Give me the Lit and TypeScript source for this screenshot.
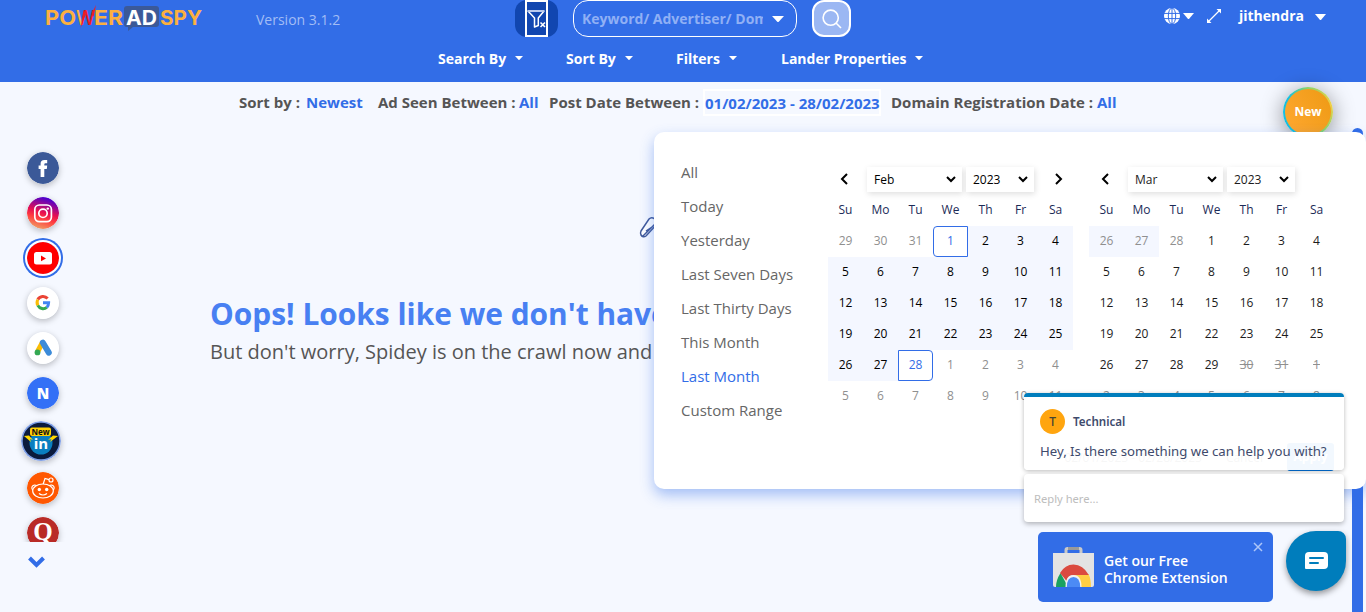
import { LitElement, html, css, svg } from "lit";
import { customElement, property } from "lit/decorators.js";
import { classMap } from "lit/directives/class-map.js";

const caret = (w: number, h: number) => html`<svg width=${w} height=${h} viewBox="0 0 10 5" preserveAspectRatio="none"><path d="M0 0H10L5.6 4.7Q5 5.2 4.4 4.7Z" fill="#fff"/></svg>`;

@customElement("month-grid")
class MonthGrid extends LitElement {
  @property() month = "";
  @property({ type: Boolean }) next = false;
  @property({ type: Boolean }) soft = false;
  @property({ type: Array }) days: string[] = [];

  static styles = css`
    :host { display: block; width: 245px; color: #000; font-size: 12px; }
    :host([soft]) { color: #1c1c1c; }
    .bar { display: flex; height: 25px; align-items: center; }
    .bar > * { flex: none; }
    .arrow { width: 35px; display: flex; justify-content: center; box-sizing: border-box; }
    .arrow.left { padding: 0 3px 2px 0; }
    .arrow.right { padding: 0 0 2px 14px; }
    .sel { height: 25px; box-sizing: border-box; display: flex; align-items: center; justify-content: space-between; background: #fff; box-shadow: 1px 2px 6px rgba(0,0,0,.13); padding: 0 6px 0 7px; }
    .m { width: 95px; margin: 0 4px; }
    .y { width: 68px; }
    .grid { display: grid; grid-template-columns: repeat(7, 35px); grid-auto-rows: 31px; }
    .head { height: 34px; color: #1c2b57; }
    .grid > span { box-sizing: border-box; display: flex; align-items: center; justify-content: center; padding-bottom: 2px; }
    .grid.head > span { padding: 3px 0 0; }
    .off { color: #8f8f8f; }
    .in { background: #f4f7ff; }
    .grid > .pick { border: 1px solid #326de7; color: #326de7; background: #fff; font-weight: 500; }
    .start { border-radius: 4px 0 0 4px; }
    .end { border-radius: 0 4px 4px 0; }
    .strike { text-decoration: line-through; }
  `;

  chev() {
    return html`<svg width="10" height="7" viewBox="0 0 10 7"><path d="M1 1L5 5L9 1" fill="none" stroke="#000" stroke-width="2"/></svg>`;
  }

  render() {
    return html`
      <div class="bar">
        <span class="arrow left"><svg width="8" height="12" viewBox="0 0 8 12"><path d="M7 1L2 6L7 11" fill="none" stroke="#000" stroke-width="2"/></svg></span>
        <span class="sel m">${this.month}${this.chev()}</span>
        <span class="sel y">2023${this.chev()}</span>
        ${this.next ? html`<span class="arrow right"><svg width="8" height="12" viewBox="0 0 8 12"><path d="M1 1L6 6L1 11" fill="none" stroke="#000" stroke-width="2"/></svg></span>` : ""}
      </div>
      <div class="grid head">${["Su", "Mo", "Tu", "We", "Th", "Fr", "Sa"].map((d) => html`<span>${d}</span>`)}</div>
      <div class="grid">
        ${this.days.map((d) => {
          const n = d.replace(/\D/g, "");
          return html`<span class=${classMap({
            off: d.includes("o"), in: d.includes("i"), strike: d.includes("x"),
            pick: /[se]/.test(d), start: d.includes("s"), end: d.includes("e"),
          })}>${n}</span>`;
        })}
      </div>`;
  }
}

const range = (a: number, b: number, flag = "") => Array.from({ length: b - a + 1 }, (_, i) => `${a + i}${flag}`);
const feb = [...range(29, 31, "o"), "1s", ...range(2, 27, "i"), "28e", ...range(1, 11, "o")];
const mar = ["26io", "27io", "28o", ...range(1, 29), "30ox", "31ox", ...range(1, 8, "ox")];

@customElement("app-root")
class AppRoot extends LitElement {
  static styles = css`
    :host { display: block; position: relative; width: 1366px; height: 612px; overflow: hidden; background: #f5f8ff; font-family: "Open Sans", "Noto Sans", sans-serif; color: #555; }
    * { box-sizing: border-box; }
    svg { display: block; flex: none; }
    header { height: 82px; background: #326de7; color: #fff; }
    .top { display: flex; height: 38px; padding-left: 45px; }
    .logo { width: 160px; }
    .version { width: 119px; margin-left: 51px; font-size: 14px; line-height: 40px; color: #a3bdf5; }
    .funnel { margin-left: 140px; width: 43px; height: 37px; border-radius: 12px; background: #1146b0; display: flex; justify-content: center; }
    .funnel div { width: 23px; height: 37px; border: 2px solid #fff; padding: 7px 0 0 0; }
    .search { margin-left: 15px; width: 224px; height: 37px; border: 1px solid #fff; border-radius: 15px; display: flex; align-items: center; padding: 0 12px 0 8px; font-size: 14px; font-weight: 700; color: #90b0f5; justify-content: space-between; }
    .search span { width: 181px; overflow: hidden; white-space: nowrap; }
    .go { margin-left: 15px; width: 39px; height: 37px; border: 2px solid #fff; border-radius: 12px; background: #9bb7f3; display: flex; justify-content: center; align-items: center; }
    .user { display: flex; margin-left: 313px; height: 31px; align-items: center; font-size: 14px; font-weight: 700; }
    .lang { margin: 0 13px 0 3px; }
    .name { margin: 0 11px 0 18px; width: 65px; white-space: nowrap; }
    .down { margin-top: 3px; }
    .menus { display: flex; padding-left: 438px; height: 40px; align-items: center; font-size: 14px; font-weight: 700; }
    .menus div { display: flex; align-items: center; justify-content: space-between; white-space: nowrap; }
    .filters { display: flex; align-items: center; height: 42px; padding: 0 0 2px 239px; font-size: 15px; font-weight: 700; color: #555; white-space: nowrap; }
    .filters b { color: #326de7; font-weight: 700; }
    .filters .date { border: 2px solid #fff; width: 178px; height: 27px; line-height: 24px; margin-top: 1px; }
    .main { display: flex; height: 488px; }
    .rail { width: 86px; padding-top: 20px; display: flex; flex-direction: column; }
    .socials { height: 398px; overflow: hidden; display: flex; flex-direction: column; align-items: center; padding-top: 8px; gap: 13px; }
    .soc { width: 32px; height: 32px; border-radius: 50%; flex: none; box-shadow: 0 2px 6px rgba(0,0,0,.25); }
    .active { box-shadow: 0 0 0 2px #fff, 0 0 0 4px #326de7; }
    .big { width: 40px; height: 40px; margin: -1px 4px -2px 0; }
    .more { margin: 14px 0 0 28px; }
    .empty { padding: 168px 0 0 124px; white-space: nowrap; }
    h1 { margin: 0; font-size: 29.9px; line-height: 44px; font-weight: 700; color: #4880f2; }
    .sub { font-size: 20px; line-height: 32px; }
    .shoe { position: absolute; left: 639px; top: 216px; }
    .track { position: absolute; left: 1352px; top: 128px; width: 11px; height: 490px; border-radius: 6px; background: #326de7; }
    .new { position: absolute; left: 1283px; top: 87px; width: 50px; height: 50px; border-radius: 50%; padding: 2px; background: conic-gradient(#8bd36b, #f0cf46 20%, #8bd36b 38%, #16bfe0 60%, #16bfe0 85%, #8bd36b); box-shadow: 0 4px 22px rgba(0,0,0,.42); }
    .new div { height: 46px; border-radius: 50%; background: linear-gradient(60deg, #ffa831, #ee9a14); color: #fff; font: 700 12px/46px "Open Sans", sans-serif; text-align: center; }
    .panel { position: absolute; left: 654px; top: 132px; width: 712px; height: 357px; border-radius: 10px; background: #fff; box-shadow: 0 6px 14px rgba(50,109,231,.42); display: flex; }
    .ranges { width: 174px; padding: 23px 0 0 27px; font-size: 15px; line-height: 34px; color: #666; }
    .chosen { color: #326de7; }
    .cals { padding-top: 35px; display: flex; flex-direction: column; }
    .pair { display: flex; gap: 16px; height: 276px; }
    .actions { display: flex; justify-content: flex-end; align-items: center; gap: 24px; width: 506px; height: 28px; font-size: 12px; }
    .apply { width: 47px; height: 28px; border-radius: 3px; background: #0074e0; color: #fff; font-weight: 700; line-height: 28px; text-align: center; }
    .chat { position: absolute; left: 1024px; top: 393px; width: 320px; display: flex; flex-direction: column; gap: 4px; color: #3e4a6c; font-family: "Noto Sans", sans-serif; }
    .msg { height: 77px; border-top: 4px solid #007dbc; border-radius: 4px; background: rgba(255,255,255,.95); box-shadow: 0 1px 4px rgba(0,0,0,.28); padding: 12px 16px; font-size: 13.2px; white-space: nowrap; }
    .who { display: flex; align-items: center; gap: 8px; height: 25px; font-size: 11.6px; font-weight: 600; }
    .av { width: 25px; height: 25px; border-radius: 50%; background: #ffa50f; color: #443; font-size: 12px; line-height: 25px; text-align: center; font-weight: 500; }
    .text { line-height: 20px; margin-top: 7px; }
    .reply { height: 48px; border-radius: 4px; background: #fff; box-shadow: 0 2px 5px rgba(0,0,0,.28); font-size: 11.2px; line-height: 49px; padding-left: 10px; color: #bdbdbd; }
    .ext { position: absolute; left: 1038px; top: 532px; width: 235px; height: 70px; border-radius: 5px; background: #326de7; color: #fff; display: flex; padding: 15px 10px 0 15px; font-size: 14px; line-height: 17px; font-weight: 600; }
    .ext p { margin: 5px 0 0 10px; width: 149px; flex: none; white-space: nowrap; }
    .x { margin-top: -5px; }
    .bubble { position: absolute; left: 1286px; top: 531px; width: 60px; height: 60px; border-radius: 50% 8px 50% 50%; background: #007dbc; box-shadow: 0 3px 6px rgba(0,0,0,.4); display: flex; align-items: center; justify-content: center; }
    .w1 { width: 85px; } .w2 { width: 67px; } .w3 { width: 61px; } .w4 { width: 142px; }
    .g1 { margin-left: 43px; } .g2 { margin-left: 43px; } .g3 { margin-left: 44px; }
    .f1 { width: 67px; } .f2 { width: 72px; } .f3 { width: 141px; } .f4 { width: 30px; } .f5 { width: 154px; } .f6 { width: 206px; margin-left: 10px; }
  `;

  logo() {
    return html`<svg class="logo" width="160" height="38" viewBox="0 0 160 38" font-family="Inter, sans-serif" font-weight="700" font-size="20">
      <defs><linearGradient id="bolt"><stop offset=".3" stop-color="#fbb040"/><stop offset=".3" stop-color="#ed1c24"/></linearGradient></defs>
      <path d="M82 6H111Q114 6 114 9V24Q114 27 111 27H88L83 31V27H82Q79 27 79 24V9Q79 6 82 6Z" fill="#3b5998"/>
      <text x="0" y="24.5" textLength="31" lengthAdjust="spacingAndGlyphs" fill="#fbb040">PO</text>
      <text x="31" y="24.5" textLength="19" lengthAdjust="spacingAndGlyphs" font-weight="500" fill="url(#bolt)">W</text>
      <text x="49" y="24.5" textLength="29" lengthAdjust="spacingAndGlyphs" fill="#fbb040">ER</text>
      <path d="M35.5 28.5L38.5 10L41 14.5L38.5 20ZM47 13L51 5L48.6 17Z" fill="#ed1c24"/>
      <text x="81" y="24.5" textLength="31" lengthAdjust="spacingAndGlyphs" fill="#fff">AD</text>
      <text x="115" y="24.5" textLength="42" lengthAdjust="spacingAndGlyphs" fill="#fbb040">SPY</text>
    </svg>`;
  }

  socials() {
    const icon = (body: unknown, cls = "") => html`<svg class="soc ${cls}" viewBox="0 0 32 32">${body}</svg>`;
    return html`
      ${icon(svg`<circle cx="16" cy="16" r="16" fill="#3b5998"/><path d="M13.6 25V17H11.6V13.6H13.6V11.7Q13.6 8 17.4 8H20.2V11.3H18.4Q17.3 11.3 17.3 12.4V13.6H20.2L19.8 17H17.3V25Z" fill="#fff"/>`)}
      ${icon(svg`<defs><linearGradient id="ig" x1=".7" y1="0" x2=".4" y2="1"><stop offset=".05" stop-color="#4a00d0"/><stop offset=".5" stop-color="#e8104f"/><stop offset=".7" stop-color="#ff4040"/><stop offset="1" stop-color="#ef9a62"/></linearGradient></defs><circle cx="16" cy="16" r="16" fill="url(#ig)"/><g fill="none" stroke="#fff" stroke-width="1.7"><rect x="7.8" y="8" width="16.6" height="16.6" rx="4.5"/><circle cx="16" cy="16.3" r="4.2"/></g><circle cx="20.8" cy="11.6" r="1.2" fill="#fff"/>`)}
      ${icon(svg`<circle cx="16" cy="16" r="16" fill="#f00"/><rect x="7" y="10" width="18" height="12.6" rx="2.5" fill="#fff"/><path d="M14 13.6V19.2L19 16.4Z" fill="#f00"/>`, "active")}
      ${icon(svg`<circle cx="16" cy="16" r="16" fill="#fff"/><g fill="none" stroke-width="3"><path d="M20.6 11.6A6 6 0 0 0 10.8 12.6" stroke="#ea4335"/><path d="M10.8 12.6A6.2 6.2 0 0 0 10.8 18.4" stroke="#fbbc05"/><path d="M10.8 18.4A6 6 0 0 0 19.8 20.4" stroke="#34a853"/><path d="M19.8 20.4Q21.5 18.8 21.6 15.7H16" stroke="#4285f4"/></g>`)}
      ${icon(svg`<circle cx="16" cy="16" r="16" fill="#fff"/><path d="M15.5 10.5L10.5 19.8" stroke="#fbbc04" stroke-width="5.2"/><path d="M15.9 10.7L21.8 20.6" stroke="#3c8bd9" stroke-width="6" stroke-linecap="round"/><circle cx="10.5" cy="20.4" r="2.9" fill="#34a853"/>`)}
      ${icon(svg`<circle cx="16" cy="16" r="16" fill="#3370f6"/><text x="16" y="21.8" text-anchor="middle" font-size="15" font-weight="800" fill="#fff">N</text>`)}
      <svg class="soc big" viewBox="0 0 40 40"><circle cx="20" cy="20" r="20" fill="#7f9fe6"/><circle cx="20" cy="20" r="18.3" fill="#0b1b3d"/><circle cx="20" cy="22" r="11.5" fill="#0a7fc0"/><text x="20" y="28.2" text-anchor="middle" font-size="15" font-weight="700" fill="#fff">in</text><path d="M3 15L8 14.5L12 19L9 18L10 21Z M37 15L32 14.5L27 19L30.5 18L29 21Z" fill="#ffd800"/><rect x="9" y="6.5" width="21" height="8.6" rx="2" fill="#ffcf05"/><text x="19.6" y="14" text-anchor="middle" font-size="8" font-weight="700" fill="#111">New</text></svg>
      ${icon(svg`<circle cx="16" cy="16" r="16" fill="#ff5700"/><g fill="none" stroke="#fff" stroke-width="1.2"><ellipse cx="16" cy="19" rx="10.3" ry="7"/><path d="M16.2 12L18 6.5L22 7.6M6 18.2A2.8 2.8 0 1 1 9.5 13.6M26 18.2A2.8 2.8 0 1 0 22.5 13.6M12 21.5Q16 24.5 20 21.5"/><circle cx="24" cy="8" r="2"/></g><circle cx="12.3" cy="17.5" r="1.7" fill="#fff"/><circle cx="19.7" cy="17.5" r="1.7" fill="#fff"/>`)}
      ${icon(svg`<circle cx="16" cy="16" r="16" fill="#b92b27"/><text x="16" y="23" text-anchor="middle" font-family="Liberation Serif, serif" font-size="25" font-weight="700" fill="#fff">Q</text>`)}`;
  }

  render() {
    return html`
      <header>
        <div class="top">
          ${this.logo()}
          <span class="version">Version 3.1.2</span>
          <div class="funnel"><div><svg width="19" height="20" viewBox="0 0 19 20"><path d="M1 2H17L11.3 9V16.5L7.5 18V9Z" fill="none" stroke="#fff" stroke-width="1.5" stroke-linejoin="round"/><path d="M1 2H17" stroke="#b9c9ee" stroke-width="2"/><path d="M13.5 13.5L18 18M18 13.5L13.5 18" stroke="#fff" stroke-width="1.6"/></svg></div></div>
          <div class="search"><span>Keyword/ Advertiser/ Domain</span>${caret(12, 6)}</div>
          <div class="go"><svg width="20" height="20" viewBox="0 0 20 20"><g fill="none" stroke="#fff" stroke-width="1.6"><circle cx="8.7" cy="8.7" r="7.6"/><path d="M14 14L19 19"/></g></svg></div>
          <div class="user">
            <svg width="16" height="16" viewBox="0 0 16 16"><circle cx="8" cy="8" r="8" fill="#fff"/><g fill="none" stroke="#326de7" stroke-width="1"><ellipse cx="8" cy="8" rx="3.7" ry="8"/><path d="M0 5.4H16M0 10.6H16M8 0V16"/></g></svg>
            <span class="lang">${caret(11, 6)}</span>
            <svg width="14" height="14" viewBox="0 0 14 14"><path d="M2 12L12 2" stroke="#fff" stroke-width="1.3"/><path d="M9.5 0H14V4.5ZM0 9.5V14H4.5Z" fill="#fff"/></svg>
            <span class="name">jithendra</span><span class="down">${caret(11, 6)}</span>
          </div>
        </div>
        <div class="menus">
          <div class="w1">Search By ${caret(8, 4)}</div>
          <div class="w2 g1">Sort By ${caret(8, 4)}</div>
          <div class="w3 g2">Filters ${caret(8, 4)}</div>
          <div class="w4 g3">Lander Properties ${caret(8, 4)}</div>
        </div>
      </header>
      <div class="filters">
        <span class="f1">Sort by :</span><b class="f2">Newest</b>
        <span class="f3">Ad Seen Between :</span><b class="f4">All</b>
        <span class="f5">Post Date Between :</span><b class="date">01/02/2023 - 28/02/2023</b>
        <span class="f6">Domain Registration Date :</span><b>All</b>
      </div>
      <div class="main">
        <nav class="rail">
          <div class="socials">${this.socials()}</div>
          <svg class="more" width="17" height="12" viewBox="0 0 17 12"><path d="M1.5 2L8.5 9L15.5 2" fill="none" stroke="#326de7" stroke-width="4"/></svg>
        </nav>
        <section class="empty">
          <h1>Oops! Looks like we don't have any ads</h1>
          <div class="sub">But don't worry, Spidey is on the crawl now and will be back</div>
        </section>
      </div>
      <svg class="shoe" width="24" height="24" viewBox="0 0 24 24"><path d="M2 15L10 3Q12 1 14 2L20 6L7 20Q4 22 2 19Q1 17 2 15ZM4 20L16 8M7 15L13 11" fill="#fff" stroke="#40599a" stroke-width="1.5"/></svg>
      <div class="track"></div>
      <div class="new"><div>New</div></div>
      <div class="panel">
        <div class="ranges">
          ${["All", "Today", "Yesterday", "Last Seven Days", "Last Thirty Days", "This Month", "Last Month", "Custom Range"].map(
            (r) => html`<div class=${classMap({ chosen: r === "Last Month" })}>${r}</div>`)}
        </div>
        <div class="cals">
          <div class="pair">
            <month-grid month="Feb" next .days=${feb}></month-grid>
            <month-grid month="Mar" soft .days=${mar}></month-grid>
          </div>
          <div class="actions"><span>02/01/2023 - 02/28/2023</span><span>Cancel</span><span class="apply">Apply</span></div>
        </div>
      </div>
      <div class="chat">
        <div class="msg"><div class="who"><span class="av">T</span>Technical</div><div class="text">Hey, Is there something we can help you with?</div></div>
        <div class="reply">Reply here...</div>
      </div>
      <div class="ext">
        <svg width="41" height="41" viewBox="0 0 41 41"><path d="M13 7V3Q13 1.5 14.5 1.5H26.5Q28 1.5 28 3V7" fill="none" stroke="#c9c9c9" stroke-width="3"/><path d="M15 1.5H26" stroke="#9a9a9a" stroke-width="3"/><path d="M0 6H41V38Q41 40 39 40H2Q0 40 0 38Z" fill="#e3e3e3"/><path d="M3 40Q3 33 7.5 26L15 40Z" fill="#1aa260"/><path d="M20 27H35.5Q38 32 38 40H25Z" fill="#ffce44"/><path d="M7 26Q12 17.5 20.5 17.5Q30 17.5 35.8 28H20.5Q15 28 13.6 34Z" fill="#db4a3f"/><path d="M12.5 40Q12.5 28 20.5 28Q28.5 28 28.5 40Z" fill="#f1f1f1"/><path d="M13.8 40Q14 30 20.5 30Q27 30 27.2 40Z" fill="#4c8bf5"/></svg>
        <p>Get our Free<br>Chrome Extension</p>
        <svg class="x" width="10" height="10" viewBox="0 0 10 10"><path d="M1 1L9 9M9 1L1 9" stroke="#adc5f8" stroke-width="1.5"/></svg>
      </div>
      <div class="bubble"><svg width="23" height="18" viewBox="0 0 23 18"><path d="M4 0H19Q23 0 23 4V13Q23 17 19 17H1Q0 17 0 16V4Q0 0 4 0Z" fill="#fff"/><path d="M5 6H18M5 11H13" stroke="#007dbc" stroke-width="2" stroke-linecap="round"/></svg></div>
    `;
  }
}
